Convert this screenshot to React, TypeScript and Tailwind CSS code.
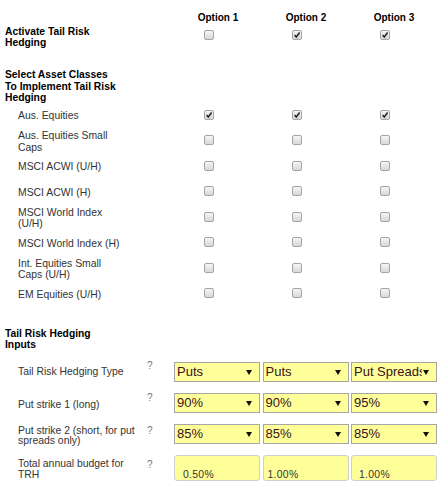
import React from "react";

const assets = [
  { label: "Aus. Equities", checks: [true, true, true] },
  { label: "Aus. Equities Small Caps", checks: [false, false, false] },
  { label: "MSCI ACWI (U/H)", checks: [false, false, false] },
  { label: "MSCI ACWI (H)", checks: [false, false, false] },
  { label: "MSCI World Index (U/H)", checks: [false, false, false] },
  { label: "MSCI World Index (H)", checks: [false, false, false] },
  { label: "Int. Equities Small Caps (U/H)", checks: [false, false, false] },
  { label: "EM Equities (U/H)", checks: [false, false, false] },
];

const Checkbox = ({ checked }: { checked?: boolean }) => (
  <span className="relative block h-[10px] w-[10px] rounded-[2px] border border-[#a4a4a4] bg-linear-to-b from-[#f5f5f5] to-[#d8d8d8]">
    {checked && (
      <svg width="10" height="10" viewBox="0 0 10 10" className="absolute -left-px -top-px">
        <path d="M2.6 5.2 L4.3 7 L7.6 2.6" fill="none" stroke="#2b2b2b" strokeWidth="1.7" />
      </svg>
    )}
  </span>
);

const Select = ({ value }: { value: string }) => (
  <div className="flex h-[20px] items-center border border-[#a6a6a6] bg-[#ffff99] pl-[2px] pr-[7px]">
    <span className="flex-1 overflow-hidden whitespace-nowrap text-[13px] leading-[18px] text-[#3a1020]">{value}</span>
    <svg width="6" height="5" viewBox="0 0 6 5" className="ml-[1px] shrink-0">
      <path d="M0 0H6L3 5Z" fill="#111" />
    </svg>
  </div>
);

const Budget = ({ value, pad }: { value: string; pad: string }) => (
  <div className={`h-[26px] rounded-[3px] border border-[#cfcfcf] bg-[#ffff99] pt-[14px] text-[10.4px] leading-[10px] tracking-[0.3px] text-[#333] ${pad}`}>
    {value}
  </div>
);

const Help = ({ className }: { className: string }) => (
  <div className={`w-[30px] pl-[3px] text-[10px] leading-[10px] text-[#777] ${className}`}>?</div>
);

const App = () => {
  return (
    <div className="h-[493px] w-[440px] overflow-hidden bg-white font-['Liberation_Sans',Arial,sans-serif] text-[#333]">
      <div className="grid h-[26px] grid-cols-[174px_88px_88px_88px] pt-[12px] text-[10px] font-bold leading-[12px] text-black">
        <div />
        <div className="text-center">Option 1</div>
        <div className="text-center">Option 2</div>
        <div className="text-center">Option 3</div>
      </div>

      <div className="grid h-[23px] grid-cols-[174px_88px_88px_88px] text-[10.3px] leading-[11px]">
        <div className="whitespace-nowrap pl-[5px] font-bold text-black">
          Activate Tail Risk
          <br />
          Hedging
        </div>
        {[false, true, true].map((c, i) => (
          <div key={i} className="pl-[30px] pt-[4px]">
            <Checkbox checked={c} />
          </div>
        ))}
      </div>

      <div className="mt-[20px] whitespace-nowrap pl-[5px] text-[10.3px] font-bold leading-[11.5px] text-black">
        Select Asset Classes
        <br />
        To Implement Tail Risk
        <br />
        Hedging
      </div>

      <div className="flex flex-col">
        {assets.map((a) => (
          <div key={a.label} className="grid h-[25.5px] grid-cols-[174px_88px_88px_88px] items-center">
            <div className="w-[124px] pl-[18px] text-[10.4px] leading-[11.7px]">{a.label}</div>
            {a.checks.map((c, i) => (
              <div key={i} className="mb-[3px] pl-[30px]">
                <Checkbox checked={c} />
              </div>
            ))}
          </div>
        ))}
      </div>

      <div className="mt-[20px] whitespace-nowrap pl-[5px] text-[10.3px] font-bold leading-[11px] text-black">
        Tail Risk Hedging
        <br />
        Inputs
      </div>

      <div className="mt-[7px] flex flex-col text-[10.4px] leading-[10.5px]">
        <div className="flex h-[31px] items-center">
          <div className="w-[144px] pl-[18px] pr-[2px]">Tail Risk Hedging Type</div>
          <Help className="mb-[13px]" />
          <div className="grid grid-cols-[86px_86px_86px] gap-x-[2.5px]">
            <Select value="Puts" />
            <Select value="Puts" />
            <Select value="Put Spreads" />
          </div>
        </div>
        <div className="flex h-[31px] items-center">
          <div className="mt-[4px] w-[144px] pl-[18px] pr-[2px]">Put strike 1 (long)</div>
          <Help className="mb-[10px]" />
          <div className="grid grid-cols-[86px_86px_86px] gap-x-[2.5px]">
            <Select value="90%" />
            <Select value="90%" />
            <Select value="95%" />
          </div>
        </div>
        <div className="flex h-[31px] items-center">
          <div className="mt-[4px] w-[144px] pl-[18px] pr-[2px]">Put strike 2 (short, for put spreads only)</div>
          <Help className="mb-[6px]" />
          <div className="grid grid-cols-[86px_86px_86px] gap-x-[2.5px]">
            <Select value="85%" />
            <Select value="85%" />
            <Select value="85%" />
          </div>
        </div>
        <div className="flex h-[37px] items-center">
          <div className="mt-[3px] w-[144px] pl-[18px] pr-[2px]">Total annual budget for TRH</div>
          <Help className="mb-[7px]" />
          <div className="grid grid-cols-[86px_86px_86px] gap-x-[2.5px]">
            <Budget value="0.50%" pad="pl-[8px]" />
            <Budget value="1.00%" pad="pl-[4px]" />
            <Budget value="1.00%" pad="pl-[7px]" />
          </div>
        </div>
      </div>
    </div>
  );
};

export default App;
